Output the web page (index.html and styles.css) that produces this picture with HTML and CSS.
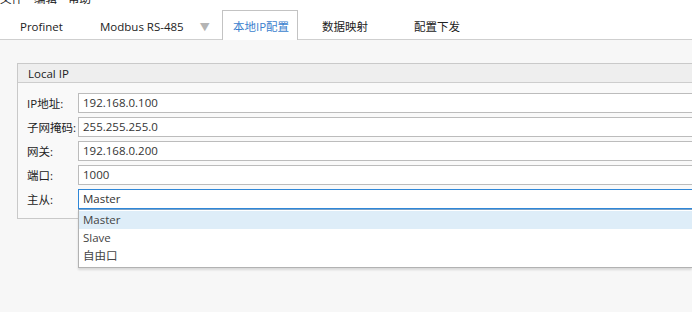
FILE: index.html
```html
<!doctype html>
<html lang="zh">

<head>
    <meta charset="UTF-8">
    <title>本地IP配置</title>
    <link rel="stylesheet" href="styles.css">
</head>

<body>
    <div class="window">
        <div class="menubar">
            <div class="menubar-inner">
                <span>文件</span>
                <span>编辑</span>
                <span>帮助</span>
            </div>
        </div>
        <div class="tabbar">
            <div class="tab tab-profinet">Profinet</div>
            <div class="tab tab-modbus">Modbus RS-485 <span class="arrow">&#9660;</span></div>
            <div class="tab active">本地IP配置</div>
            <div class="tab tab-map">数据映射</div>
            <div class="tab tab-deploy">配置下发</div>
        </div>
        <div class="content">
            <div class="group">
                <div class="group-title">Local IP</div>
                <div class="group-body">
                    <div class="row">
                        <label>IP地址:</label>
                        <div class="field">192.168.0.100</div>
                    </div>
                    <div class="row">
                        <label>子网掩码:</label>
                        <div class="field">255.255.255.0</div>
                    </div>
                    <div class="row">
                        <label>网关:</label>
                        <div class="field">192.168.0.200</div>
                    </div>
                    <div class="row">
                        <label>端口:</label>
                        <div class="field">1000</div>
                    </div>
                    <div class="row">
                        <label>主从:</label>
                        <div class="combo">
                            <div class="field focused">Master</div>
                            <div class="dropdown">
                                <div class="option selected">Master</div>
                                <div class="option">Slave</div>
                                <div class="option">自由口</div>
                            </div>
                        </div>
                    </div>
                </div>
            </div>
        </div>
    </div>
</body>

</html>
```

FILE: styles.css
```css
html,
body {
    margin: 0;
    height: 100%;
    overflow: hidden;
}

body {
    font-family: 'Open Sans', 'Noto Sans CJK SC', sans-serif;
    font-size: 11.5px;
    color: #333;
    background: #f7f7f7;
}

.window {
    width: 692px;
    height: 312px;
    display: flex;
    flex-direction: column;
}

.menubar {
    height: 8px;
    overflow: hidden;
    background: #fff;
}

.menubar-inner {
    margin-top: -9px;
    line-height: 16px;
    display: flex;
    gap: 11px;
    color: #222;
}

.tabbar {
    height: 31px;
    display: flex;
    align-items: flex-end;
    background: #fff;
    border-bottom: 1px solid #cfcfcf;
}

.tab {
    height: 29px;
    padding-top: 4px;
    line-height: 25px;
    box-sizing: border-box;
    color: #222;
    white-space: nowrap;
}

.tab-profinet {
    padding-left: 20px;
    width: 100px;
}

.tab-modbus {
    width: 122px;
}

.arrow {
    color: #b4b4b4;
    font-size: 10px;
    margin-left: 13px;
}

.tab.active {
    width: 76px;
    height: 30px;
    text-align: center;
    color: #3b7fce;
    background: #fff;
    border: 1px solid #c3c3c3;
    border-bottom: none;
    margin-bottom: -1px;
    padding-top: 3px;
    padding-left: 2px;
}

.tab-map {
    padding-left: 24px;
    width: 116px;
}

.content {
    flex: 1;
    padding: 23px 0 0 17px;
    background: #f7f7f7;
}

.group {
    border: 1px solid #c9c9c9;
    border-right: none;
    background: #f9f9f9;
}

.group-title {
    height: 18px;
    line-height: 19px;
    padding-left: 10px;
    background: #eeeeee;
    border-bottom: 1px solid #cdcdcd;
    color: #222;
}

.group-body {
    padding: 10px 0 9px 9px;
    display: flex;
    flex-direction: column;
    gap: 4px;
}

.row {
    display: flex;
    align-items: center;
}

.row label {
    width: 51px;
    color: #222;
    white-space: nowrap;
}

.field {
    height: 20px;
    line-height: 18px;
    box-sizing: border-box;
    padding-left: 4px;
    background: #fff;
    border: 1px solid #bcbcbc;
    border-right: none;
    flex: 1;
}

.combo {
    flex: 1;
    position: relative;
}

.field.focused {
    border-color: #2f87d8;
}

.dropdown {
    position: absolute;
    left: 0;
    right: 0;
    top: 20px;
    height: 59px;
    box-sizing: border-box;
    padding-top: 1px;
    background: #fff;
    border: 1px solid #b2b2b2;
    border-top: 1px solid #7aa2c8;
    border-right: none;
    box-shadow: 0 2px 2px rgba(0, 0, 0, 0.12);
    z-index: 2;
}

.option {
    height: 18px;
    line-height: 18px;
    padding-left: 4px;
    color: #444;
}

.option.selected {
    background: #deedf8;
}
```
